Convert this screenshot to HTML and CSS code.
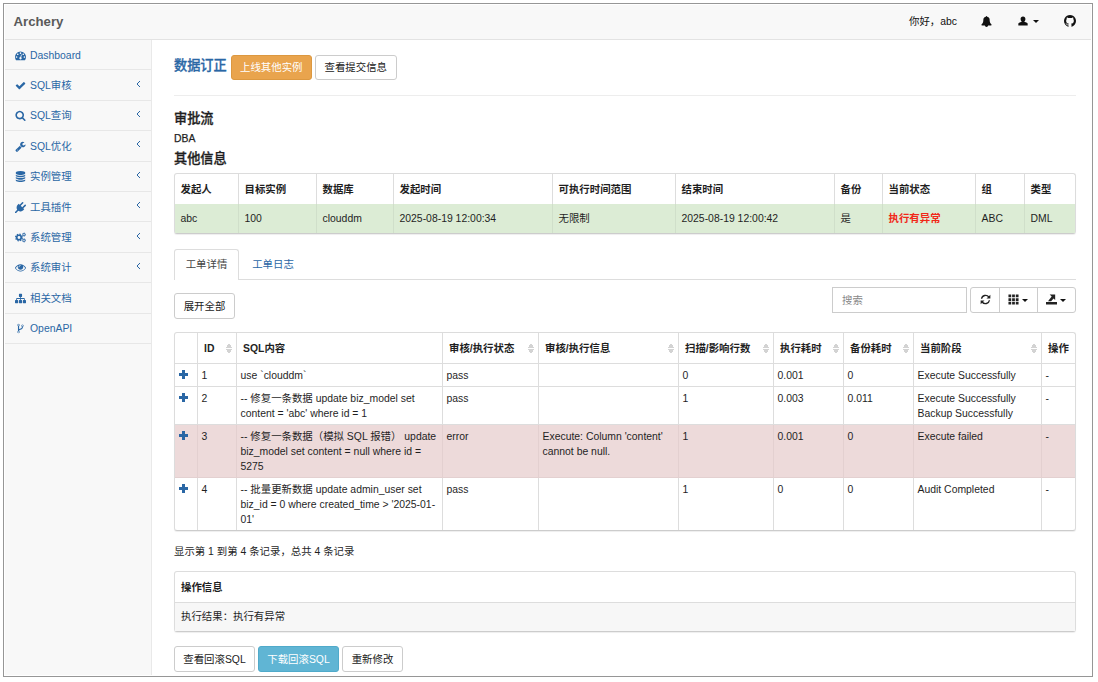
FILE: index.html
```html
<!DOCTYPE html>
<html lang="zh-CN">
<head>
<meta charset="utf-8">
<title>Archery</title>
<link rel="stylesheet" href="styles.css">
</head>
<body>
<div class="frame">
  <header class="navbar">
    <div class="brand">Archery</div>
    <span class="hello">你好，abc</span>
    <svg class="icon bell" viewBox="0 0 1792 1792"><path d="M1728 1408q0 52-38 90t-90 38h-448q0 106-75 181t-181 75-181-75-75-181h-448q-52 0-90-38t-38-90q50-42 91-88t85-119.500 74.500-158.500 50-206 19.500-260q0-152 117-282.500t307-158.500q-8-19-8-39 0-40 28-68t68-28 68 28 28 68q0 20-8 39 190 28 307 158.500t117 282.500q0 139 19.500 260t50 206 74.500 158.500 85 119.500 91 88z"/></svg>
    <svg class="icon user" viewBox="0 0 12 12"><path d="M6 .5c1.900 0 2.900 1.300 2.900 3 0 1.300-.5 2.300-1.200 2.900v.4l3 1.200c.7.300.9.800.9 1.400V11.500H.4V9.400c0-.6.2-1.100.9-1.400l3-1.200v-.4C3.600 5.800 3.100 4.800 3.100 3.500 3.100 1.800 4.100.5 6 .5z"/></svg>
    <span class="caret"></span>
    <svg class="icon github" viewBox="0 0 1792 1792"><path d="M896 128q209 0 385.500 103t279.500 279.500 103 385.500q0 251-146.500 451.500t-378.500 277.500q-27 5-40-7t-13-30q0-3 .5-76.500t.5-134.500q0-97-52-142 57-6 102.500-18t94-39 81-66.500 53-105 20.500-150.500q0-119-79-206 37-91-8-204-28-9-81 11t-92 44l-38 24q-93-26-192-26t-192 26q-16-11-42.500-27t-83.500-38.500-85-13.500q-45 113-8 204-79 87-79 206 0 85 20.500 150t52.500 105 80.500 67 94 39 102.500 18q-39 36-49 103-21 10-45 15t-57 5-65.500-21.500-55.500-62.500q-19-32-48.500-52t-49.500-24l-20-3q-21 0-29 4.500t-5 11.500 9 14 13 12l7 5q22 10 43.500 38t31.500 51l10 23q13 38 44 61.500t67 30 69.500 7 55.500-3.500l23-4q0 38 .5 88.500t.5 54.500q0 18-13 30t-40 7q-232-77-378.500-277.500t-146.500-451.500q0-209 103-385.500t279.500-279.500 385.500-103z"/></svg>
  </header>
  <div class="body">
    <nav class="sidebar">
      <a class="item"><svg class="icon" viewBox="0 0 1792 1792"><path d="M384 1152q0-53-37.500-90.500t-90.500-37.500-90.500 37.500-37.500 90.500 37.500 90.500 90.500 37.500 90.500-37.500 37.500-90.500zm192-448q0-53-37.500-90.500t-90.500-37.500-90.500 37.500-37.500 90.500 37.500 90.500 90.500 37.500 90.500-37.500 37.500-90.500zm428 481l101-382q6-26-7.500-48.500t-38.500-29.500-48 6.500-30 39.500l-101 382q-60 5-107 43.500t-63 98.500q-20 77 20 146t117 89 146-20 89-117q16-60-6-117t-72-91zm660-33q0-53-37.500-90.500t-90.500-37.500-90.500 37.500-37.500 90.500 37.500 90.500 90.500 37.500 90.500-37.500 37.500-90.500zm-640-640q0-53-37.500-90.500t-90.500-37.500-90.500 37.500-37.500 90.500 37.500 90.500 90.500 37.500 90.500-37.500 37.500-90.500zm448 192q0-53-37.500-90.500t-90.500-37.500-90.500 37.500-37.500 90.500 37.500 90.500 90.500 37.500 90.500-37.500 37.500-90.500zm320 448q0 261-141 483-19 29-54 29h-1402q-35 0-54-29-141-221-141-483 0-182 71-348t191-286 286-191 348-71 348 71 286 191 191 286 71 348z"/></svg><span>Dashboard</span></a>
      <a class="item"><svg class="icon" viewBox="0 0 1792 1792"><path d="M1671 566q0 40-28 68l-724 724-136 136q-28 28-68 28t-68-28l-136-136-362-362q-28-28-28-68t28-68l136-136q28-28 68-28t68 28l294 295 656-657q28-28 68-28t68 28l136 136q28 28 28 68z"/></svg><span>SQL审核</span><svg class="chev" viewBox="0 0 5 8"><path d="M4 1L1 4L4 7"/></svg></a>
      <a class="item"><svg class="icon" viewBox="0 0 1792 1792"><path d="M1216 832q0-185-131.500-316.500t-316.500-131.500-316.500 131.500-131.500 316.500 131.500 316.500 316.500 131.500 316.500-131.500 131.500-316.500zm512 832q0 52-38 90t-90 38q-54 0-90-38l-343-342q-179 124-399 124-143 0-273.500-55.500t-225-150-150-225-55.500-273.500 55.500-273.500 150-225 225-150 273.500-55.500 273.500 55.500 225 150 150 225 55.500 273.500q0 220-124 399l343 343q37 37 37 90z"/></svg><span>SQL查询</span><svg class="chev" viewBox="0 0 5 8"><path d="M4 1L1 4L4 7"/></svg></a>
      <a class="item"><svg class="icon" viewBox="0 0 1792 1792"><path d="M448 1472q0-26-19-45t-45-19-45 19-19 45 19 45 45 19 45-19 19-45zm644-420l-682 682q-37 37-90 37-52 0-91-37l-106-108q-38-36-38-90 0-53 38-91l681-681q39 98 114.500 173.500t173.500 114.500zm634-435q0 39-23 106-47 134-164.500 217.500t-258.500 83.500q-185 0-316.500-131.500t-131.500-316.500 131.500-316.500 316.500-131.500q58 0 121.500 16.500t107.500 46.500q16 11 16 28t-16 28l-293 169v224l193 107q5-3 79-48.500t135.500-81 70.500-35.500q15 0 23.500 10t8.500 25z"/></svg><span>SQL优化</span><svg class="chev" viewBox="0 0 5 8"><path d="M4 1L1 4L4 7"/></svg></a>
      <a class="item"><svg class="icon" viewBox="0 0 1792 1792"><path d="M896 768q237 0 443-43t325-127v170q0 69-103 128t-280 93.500-385 34.500-385-34.500-280-93.500-103-128v-170q119 84 325 127t443 43zm0 768q237 0 443-43t325-127v170q0 69-103 128t-280 93.500-385 34.500-385-34.500-280-93.500-103-128v-170q119 84 325 127t443 43zm0-384q237 0 443-43t325-127v170q0 69-103 128t-280 93.500-385 34.500-385-34.500-280-93.500-103-128v-170q119 84 325 127t443 43zm0-1152q208 0 385 34.500t280 93.500 103 128v128q0 69-103 128t-280 93.500-385 34.500-385-34.500-280-93.500-103-128v-128q0-69 103-128t280-93.500 385-34.500z"/></svg><span>实例管理</span><svg class="chev" viewBox="0 0 5 8"><path d="M4 1L1 4L4 7"/></svg></a>
      <a class="item"><svg class="icon" viewBox="0 0 1792 1792"><path d="M1755 453q37 38 37 90.500t-37 90.500l-401 400 150 150-160 160q-163 163-389.500 186.500t-411.500-100.500l-362 362h-181v-181l362-362q-124-185-100.500-411.500t186.500-389.500l160-160 150 150 400-401q38-37 91-37t90 37 37 90.500-37 90.500l-400 401 234 234 401-400q38-37 91-37t90 37z"/></svg><span>工具插件</span><svg class="chev" viewBox="0 0 5 8"><path d="M4 1L1 4L4 7"/></svg></a>
      <a class="item"><svg class="icon gears" viewBox="0 0 18 18"><circle cx="6.500" cy="9" r="3.700" stroke-width="2.800"/><circle cx="6.500" cy="9" r="5.600" stroke-width="1.800" stroke-dasharray="2.400 2"/><circle cx="14.700" cy="4.300" r="1.900" stroke-width="1.500"/><circle cx="14.700" cy="4.300" r="2.900" stroke-width="1" stroke-dasharray="1.500 1.500"/><circle cx="14.700" cy="13.700" r="1.900" stroke-width="1.500"/><circle cx="14.700" cy="13.700" r="2.900" stroke-width="1" stroke-dasharray="1.500 1.500"/></svg><span>系统管理</span><svg class="chev" viewBox="0 0 5 8"><path d="M4 1L1 4L4 7"/></svg></a>
      <a class="item"><svg class="icon" viewBox="0 0 1792 1792"><path d="M1664 960q-152-236-381-353 61 104 61 225 0 185-131.500 316.500t-316.500 131.500-316.500-131.500-131.500-316.500q0-121 61-225-229 117-381 353 133 205 333.500 326.500t434.500 121.500 434.500-121.500 333.500-326.500zm-720-384q0-20-14-34t-34-14q-125 0-214.500 89.500t-89.500 214.500q0 20 14 34t34 14 34-14 14-34q0-86 61-147t147-61q20 0 34-14t14-34zm848 384q0 34-20 69-140 230-376.500 368.500t-499.500 138.500-499.500-139-376.500-368q-20-35-20-69t20-69q140-229 376.500-368t499.500-139 499.500 139 376.500 368q20 35 20 69z"/></svg><span>系统审计</span><svg class="chev" viewBox="0 0 5 8"><path d="M4 1L1 4L4 7"/></svg></a>
      <a class="item"><svg class="icon" viewBox="0 0 1792 1792"><path d="M1792 1248v320q0 40-28 68t-68 28h-320q-40 0-68-28t-28-68v-320q0-40 28-68t68-28h96v-192h-512v192h96q40 0 68 28t28 68v320q0 40-28 68t-68 28h-320q-40 0-68-28t-28-68v-320q0-40 28-68t68-28h96v-192h-512v192h96q40 0 68 28t28 68v320q0 40-28 68t-68 28h-320q-40 0-68-28t-28-68v-320q0-40 28-68t68-28h96v-192q0-52 38-90t90-38h512v-192h-96q-40 0-68-28t-28-68v-320q0-40 28-68t68-28h320q40 0 68 28t28 68v320q0 40-28 68t-68 28h-96v192h512q52 0 90 38t38 90v192h96q40 0 68 28t28 68z"/></svg><span>相关文档</span></a>
      <a class="item"><svg class="icon" viewBox="0 0 1792 1792"><path d="M672 1472q0-40-28-68t-68-28-68 28-28 68 28 68 68 28 68-28 28-68zm0-1152q0-40-28-68t-68-28-68 28-28 68 28 68 68 28 68-28 28-68zm640 128q0-40-28-68t-68-28-68 28-28 68 28 68 68 28 68-28 28-68zm96 0q0 52-26 96.500t-70 69.500q-2 287-226 414-67 38-203 81-128 40-169.500 71t-41.500 100v26q44 25 70 69.500t26 96.500q0 80-56 136t-136 56-136-56-56-136q0-52 26-96.500t70-69.500v-820q-44-25-70-69.500t-26-96.500q0-80 56-136t136-56 136 56 56 136q0 52-26 96.500t-70 69.500v497q54-26 154-57 55-17 87.500-29.500t70.500-31 59-39.500 40.500-51 28-69.500 8.500-91.500q-44-25-70-69.500t-26-96.500q0-80 56-136t136-56 136 56 56 136z"/></svg><span>OpenAPI</span></a>
    </nav>
    <main class="content">
      <div class="title-row">
        <h1 class="title">数据订正</h1>
        <button class="btn warning">上线其他实例</button>
        <button class="btn">查看提交信息</button>
      </div>
      <h2 class="section">审批流</h2>
      <div class="flow">DBA</div>
      <h2 class="section">其他信息</h2>
      <table class="table info">
        <colgroup><col><col><col><col><col><col><col><col><col><col></colgroup>
        <tr><th>发起人</th><th>目标实例</th><th>数据库</th><th>发起时间</th><th>可执行时间范围</th><th>结束时间</th><th>备份</th><th>当前状态</th><th>组</th><th>类型</th></tr>
        <tr class="success"><td>abc</td><td>100</td><td>clouddm</td><td>2025-08-19 12:00:34</td><td>无限制</td><td>2025-08-19 12:00:42</td><td>是</td><td class="bad">执行有异常</td><td>ABC</td><td>DML</td></tr>
      </table>
      <div class="tabs"><a class="tab active">工单详情</a><a class="tab">工单日志</a></div>
      <div class="toolbar">
        <button class="btn expand">展开全部</button>
        <input class="search" placeholder="搜索">
        <div class="group">
          <button class="tool"><svg class="glyph" viewBox="0 0 12 12"><path class="line" d="M1.700 5.200A4.400 4.400 0 0 1 9.600 3.300M10.300 6.800A4.400 4.400 0 0 1 2.400 8.700"/><path d="M11.300 .8V5H7.100zM.7 11.200V7H4.900z"/></svg></button>
          <button class="tool"><svg class="glyph" viewBox="0 0 12 12"><path d="M.5 .5h3v3h-3zM4.500 .5h3v3h-3zM8.500 .5h3v3h-3zM.5 4.500h3v3h-3zM4.500 4.500h3v3h-3zM8.500 4.500h3v3h-3zM.5 8.500h3v3h-3zM4.500 8.500h3v3h-3zM8.500 8.500h3v3h-3z"/></svg><span class="caret"></span></button>
          <button class="tool"><svg class="glyph" viewBox="0 0 12 12"><path d="M0 8.800h12v2.700H0zM4 .5H10V6.500L8.200 4.800L5.600 7.800H2.200L6.200 2.800z"/></svg><span class="caret"></span></button>
        </div>
      </div>
      <table class="table detail">
        <colgroup><col><col><col><col><col><col><col><col><col><col></colgroup>
        <tr><th></th><th class="sort">ID</th><th>SQL内容</th><th class="sort">审核/执行状态</th><th class="sort">审核/执行信息</th><th class="sort">扫描/影响行数</th><th class="sort">执行耗时</th><th class="sort">备份耗时</th><th class="sort">当前阶段</th><th>操作</th></tr>
        <tr><td><i class="plus"></i></td><td>1</td><td>use `clouddm`</td><td>pass</td><td></td><td>0</td><td>0.001</td><td>0</td><td>Execute Successfully</td><td>-</td></tr>
        <tr><td><i class="plus"></i></td><td>2</td><td>-- 修复一条数据 update biz_model set<br>content = 'abc' where id = 1</td><td>pass</td><td></td><td>1</td><td>0.003</td><td>0.011</td><td>Execute Successfully<br>Backup Successfully</td><td>-</td></tr>
        <tr class="danger"><td><i class="plus"></i></td><td>3</td><td>-- 修复一条数据（模拟 SQL 报错） update<br>biz_model set content = null where id =<br>5275</td><td>error</td><td>Execute: Column 'content'<br>cannot be null.</td><td>1</td><td>0.001</td><td>0</td><td>Execute failed</td><td>-</td></tr>
        <tr><td><i class="plus"></i></td><td>4</td><td>-- 批量更新数据 update admin_user set<br>biz_id = 0 where created_time &gt; '2025-01-<br>01'</td><td>pass</td><td></td><td>1</td><td>0</td><td>0</td><td>Audit Completed</td><td>-</td></tr>
      </table>
      <p class="summary">显示第 1 到第 4 条记录，总共 4 条记录</p>
      <div class="panel">
        <div class="panel-head">操作信息</div>
        <div class="panel-body">执行结果：执行有异常</div>
      </div>
      <div class="actions">
        <button class="btn sqlbtn">查看回滚SQL</button>
        <button class="btn info-btn sqlbtn">下载回滚SQL</button>
        <button class="btn expand">重新修改</button>
      </div>
    </main>
  </div>
</div>
</body>
</html>
```
FILE: styles.css
```css
* { box-sizing: border-box; }
body {
  margin: 0;
  padding: 3px;
  background: #fff;
  color: #1f1f1f;
  font: 10.42px/15px "Liberation Sans", "Noto Sans CJK SC", sans-serif;
}
.frame {
  width: 1090px;
  height: 674px;
  border: 1px solid #969696;
  padding: 1px;
  overflow: hidden;
}
.navbar {
  height: 35px;
  background: #f8f8f8;
  border-bottom: 1px solid #e3e3e3;
  display: flex;
  align-items: center;
  padding: 0 14px 2px 8.500px;
  color: #111;
}
.brand { font-size: 13.2px; font-weight: bold; color: #5a5a5a; flex: 1; }
.icon { display: block; width: 11px; height: 11px; fill: currentColor; flex: none; }
.hello { margin-right: 24px; }
.bell { margin-right: 26px; }
.user { margin-right: 5px; width: 10px; height: 10px; }
.github { margin-left: 24px; width: 14px; height: 14px; }
.caret {
  border: 3px solid transparent;
  border-top: 3.500px solid #111;
  border-bottom: 0;
}
.body { display: flex; height: 635px; }
.sidebar {
  width: 147px;
  background: #f8f8f8;
  border-right: 1px solid #e9e9e9;
  flex: none;
}
.item {
  display: flex;
  align-items: center;
  height: 30.400px;
  border-bottom: 1px solid #e7e7e7;
  padding: 1px 10px 0 10px;
  gap: 4px;
  color: #2a67a5;
}
.item span { flex: 1; }
.gears { fill: none; stroke: currentColor; }
.chev { width: 5px; height: 8px; fill: none; stroke: currentColor; stroke-width: 1; margin-top: -4px; }
.content { width: 924px; padding: 14px 0 0 22px; }
.title-row {
  display: flex;
  gap: 3px;
  width: 902px;
  height: 42px;
  border-bottom: 1px solid #ededed;
  margin-bottom: 13px;
}
.title { margin: 4px 1px 0 0; font-size: 13.200px; line-height: 15px; font-weight: 500; color: #2a67a5; -webkit-text-stroke: .3px; }
.btn {
  height: 26px;
  width: 81px;
  padding: 0;
  border: 1px solid #ccc;
  border-radius: 3px;
  background: #fff;
  color: #222;
  font: inherit;
  white-space: nowrap;
}
.title-row .btn { margin-top: 1px; height: 25px; padding-bottom: 1px; }
.title-row .btn:last-child { width: 82px; }
.warning { background: #e9a44d; border-color: #dc9840; color: #fff; }
.section { margin: 0; font-size: 13.200px; line-height: 20px; height: 21px; font-weight: 500; -webkit-text-stroke: .3px; }
.flow { height: 19px; line-height: 18px; -webkit-text-stroke: .25px; }
.table {
  width: 902px;
  table-layout: fixed;
  border-collapse: separate;
  border-spacing: 0;
  border: 1px solid #dcdcdc;
  border-bottom-color: #ccc;
  border-radius: 3px;
  box-shadow: 0 1px 1px #eee;
}
th, td { text-align: left; border-right: 1px solid #ddd; white-space: nowrap; }
th:last-child, td:last-child { border-right: 0; }
th { height: 31px; padding: 0 6px; font-weight: bold; border-bottom: 1px solid #ddd; }
.info { margin-top: 3px; }
.info th { height: 30px; padding: 1px 5.500px 0; border-bottom: 0; }
.info td { height: 29px; padding: 0 5.500px; }
.info .success td { background: #dcecd5; border-color: #d0dfca; }
.info .success .bad { color: #f12718; font-weight: bold; }
.info col:nth-child(1) { width: 64px; }
.info col:nth-child(2) { width: 78px; }
.info col:nth-child(3) { width: 77px; }
.info col:nth-child(4) { width: 159px; }
.info col:nth-child(5) { width: 123px; }
.info col:nth-child(6) { width: 159px; }
.info col:nth-child(7) { width: 48px; }
.info col:nth-child(8) { width: 93px; }
.info col:nth-child(9) { width: 49px; }
.tabs { display: flex; height: 31px; margin-top: 15px; width: 902px; box-shadow: inset 0 -1px #ddd; }
.tab { width: 68px; line-height: 32px; text-align: center; color: #2a67a5; }
.tab.active { width: 65px; line-height: 30px; color: #444; background: #fff; border: 1px solid #ddd; border-bottom: 0; border-radius: 3px 3px 0 0; }
.toolbar { display: flex; height: 52px; width: 902px; padding-top: 7px; }
.expand { width: 61px; }
.toolbar .expand { margin-top: 6px; }
.search { margin-left: auto; width: 135px; height: 26px; border: 1px solid #ccc; padding: 0 9px; font: inherit; background: #fff; }
.search::placeholder { color: #888; }
.group { display: flex; margin-left: 3px; width: 106px; height: 26px; border: 1px solid #ccc; border-radius: 3px; }
.tool { display: flex; align-items: center; justify-content: center; gap: 3px; flex: 1 1 38px; padding: 0 1px 1px 0; border: 0; background: transparent; }
.tool:first-child { flex: 0 0 28px; padding-right: 0; }
.tool + .tool { border-left: 1px solid #ccc; }
.glyph { width: 11px; height: 11px; fill: #222; }
.glyph .line { fill: none; stroke: #222; stroke-width: 1.500; }
.tool .caret { margin-top: 2px; }
.detail th { border-color: #ddd; }
.detail td { padding: 4px 3px 3px 3.500px; vertical-align: top; border-bottom: 1px solid #ddd; }
.detail tr:last-child td { border-bottom: 0; }
.detail .danger td { background: #eddada; border-color: #e3d0d0; }
.detail col:nth-child(1) { width: 23px; }
.detail col:nth-child(2) { width: 39px; }
.detail col:nth-child(3) { width: 206px; }
.detail col:nth-child(4) { width: 96px; }
.detail col:nth-child(5) { width: 140px; }
.detail col:nth-child(6) { width: 95px; }
.detail col:nth-child(7) { width: 70px; }
.detail col:nth-child(8) { width: 70px; }
.detail col:nth-child(9) { width: 128px; }
.sort {
  background:
    conic-gradient(from 149deg at 50% 0, #d3d3d3 62deg, transparent 0) right 4px top 10px / 6px 5px no-repeat,
    conic-gradient(from -31deg at 50% 100%, #d3d3d3 62deg, transparent 0) right 4px top 16px / 6px 5px no-repeat;
}
.plus {
  display: block;
  width: 9px;
  height: 9px;
  margin-top: 2px;
  background:
    linear-gradient(#2a67a5, #2a67a5) center / 9px 3px no-repeat,
    linear-gradient(#2a67a5, #2a67a5) center / 3px 9px no-repeat;
}
.summary { margin: 13px 0 12px; }
.panel { width: 902px; height: 61px; border: 1px solid #ddd; border-bottom-color: #ccc; border-radius: 3px; box-shadow: 0 1px 1px #eee; }
.panel-head { height: 31px; padding: 1px 6px 0; line-height: 30px; font-weight: bold; border-bottom: 1px solid #ddd; }
.panel-body { height: 28px; padding: 0 6px; line-height: 27px; background: #f7f7f7; }
.actions { display: flex; gap: 3px; margin-top: 14px; }
.sqlbtn { width: 81px; }
.info-btn { background: #60b5d4; border-color: #50aaca; color: #fff; }
```
